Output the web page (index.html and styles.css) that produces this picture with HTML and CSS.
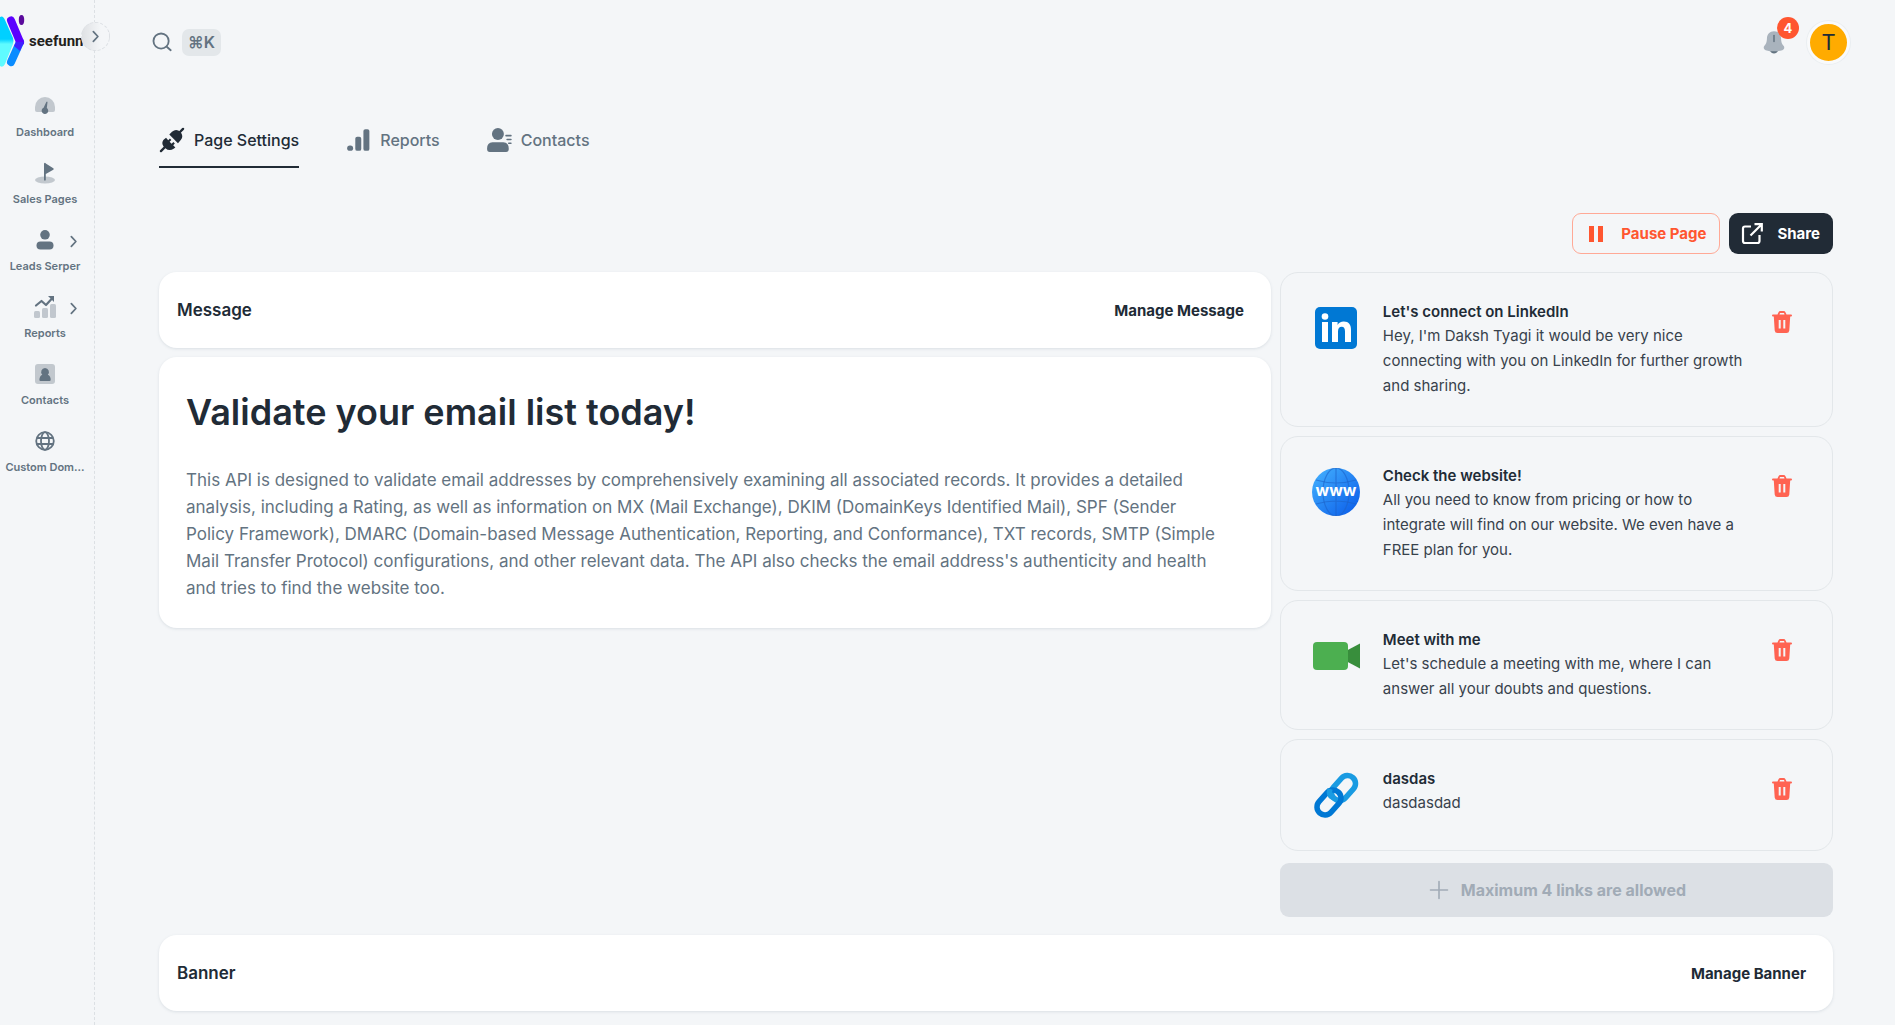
FILE: index.html
```html
<!DOCTYPE html>
<html lang="en">
<head>
<meta charset="utf-8">
<meta name="viewport" content="width=device-width, initial-scale=1">
<title>Page Settings</title>
<link rel="stylesheet" href="styles.css">
</head>
<body>
<svg class="sprite" aria-hidden="true">
  <symbol id="trash" viewBox="0 0 24 24"><path fill-rule="evenodd" d="M7.500 4.500 8.400 2.400Q9 1 10.500 1h3Q15 1 15.600 2.400l.9 2.100H21a1 1 0 0 1 0 2h-.8l-.9 14Q19 23 16.500 23h-9Q5 23 4.700 20.500l-.9-14H3a1 1 0 0 1 0-2zM9.500 4.500h5L14 3h-4zM8.700 10v8.500h2V10zM13.300 10v8.500h2V10z"/></symbol>
  <symbol id="chevron" viewBox="0 0 12 12"><path d="M4 1.500 8.200 6 4 10.500" fill="none" stroke="currentColor" stroke-width="1.600" stroke-linecap="round" stroke-linejoin="round"/></symbol>
</svg>
<div class="layout">
  <aside class="sidebar">
    <a class="logo" href="#" aria-label="seefunnel">
      <svg class="logo-mark" viewBox="0 0 26 54" aria-hidden="true">
        <defs><linearGradient id="cyan" x2="0" y2="1"><stop offset="0.450" stop-color="#00d0ff"/><stop offset="0.550" stop-color="#5ffbff"/></linearGradient></defs>
        <path d="M0 3Q3 1 5 6L13 24Q14 27 13 30L5 50Q3 54 0 52z" fill="url(#cyan)"/>
        <path d="M11 48 20 28" stroke="#0a8cff" stroke-width="8" stroke-linecap="round"/>
        <path d="M11 6.500 20 28" stroke="#5b00ff" stroke-width="8" stroke-linecap="round"/>
        <path d="M16 28h8L20 37 14 32z" fill="#4020ff"/>
        <ellipse cx="21.500" cy="6" rx="2.700" ry="5" fill="#5a0a9c"/>
      </svg>
      <span class="logo-text">seefunnel</span>
    </a>
    <button class="collapse" aria-label="Expand menu"><svg width="13" height="13"><use href="#chevron"/></svg></button>
    <nav class="menu">
      <a href="#"><svg viewBox="0 0 24 24"><path opacity=".35" d="M2 13a10 10 0 0 1 20 0v3q0 2-2 2H4q-2 0-2-2z"/><path d="M14.500 8.200 13.800 14a3.300 3.300 0 1 1-3.200-.3l2.700-5.800q1-.8 1.200.3z"/></svg><span>Dashboard</span></a>
      <a href="#"><svg viewBox="0 0 24 24"><ellipse opacity=".35" cx="12" cy="19" rx="10" ry="3.500"/><path d="M11 2.500q1-1.500 1.800 0l7.500 4.700q1 .8 0 1.500L12.800 13v6q-.9 1.500-1.800 0z"/></svg><span>Sales Pages</span></a>
      <a href="#"><svg viewBox="0 0 24 24"><circle cx="12" cy="6.800" r="4.800"/><rect x="3.500" y="13.500" width="17" height="8" rx="4"/></svg><span>Leads Serper</span><svg class="more"><use href="#chevron"/></svg></a>
      <a href="#"><svg viewBox="0 0 24 24"><g opacity=".35"><rect x="1" y="16" width="6" height="7" rx="1.500"/><rect x="9" y="13" width="6" height="10" rx="1.500"/><rect x="17" y="9" width="6" height="14" rx="1.500"/></g><path d="M3 10.500 8.500 6l4.500 4 6-6.500" fill="none" stroke="currentColor" stroke-width="2.200" stroke-linecap="round" stroke-linejoin="round"/><path d="M15 1h6v6z"/></svg><span>Reports</span><svg class="more"><use href="#chevron"/></svg></a>
      <a href="#"><svg viewBox="0 0 24 24"><rect opacity=".35" x="2" y="2" width="20" height="20" rx="3"/><path d="M12 6a4 4 0 0 1 2.800 6.800q3 1.300 2.900 5.200Q17.600 19 16.500 19h-9q-1 0-1.100-1 0-4 2.900-5.200A4 4 0 0 1 12 6z"/></svg><span>Contacts</span></a>
      <a href="#"><svg viewBox="0 0 24 24"><g fill="none" stroke="currentColor" stroke-width="1.800"><circle cx="12" cy="12" r="8.800"/><ellipse cx="12" cy="12" rx="4" ry="8.800"/><path d="M4 9h16M4 15h16"/></g></svg><span>Custom Dom...</span></a>
    </nav>
  </aside>
  <div class="content">
    <header class="topbar">
      <button class="search" aria-label="Search"><svg width="22" height="22" viewBox="0 0 24 24"><path d="M17.500 17.500 21.500 21" /><circle cx="11" cy="11" r="8.300"/></svg><kbd>⌘K</kbd></button>
      <div class="account">
        <button class="bell" aria-label="4 notifications"><svg width="26" height="26" viewBox="0 0 24 24"><path d="M8 19.500h8q-1.500 3-4 3t-4-3z" fill="#637381"/><path d="M12 2c-4 0-6.300 2.700-6.500 6.500-.2 4-.8 5-2.500 7.300-1.200 2 .1 3.300 1.300 3.700 5 1.500 10.400 1.500 15.400 0 1.200-.4 2.500-1.700 1.300-3.700-1.700-2.300-2.300-3.300-2.500-7.300C18.300 4.700 16 2 12 2z" fill="#a9b3bd"/><path d="M12 6v5.500" stroke="#637381" stroke-width="1.400" stroke-linecap="round"/></svg><span class="badge">4</span></button>
        <button class="avatar">T</button>
      </div>
    </header>
    <main>
      <nav class="tabs">
        <a class="active" href="#"><svg viewBox="0 0 24 24"><path d="M1.800 22.200 6 18M18 6l4.200-4.200" stroke="currentColor" stroke-width="2.200" stroke-linecap="round"/><path d="M4 12 6.500 10l2 2.200 1.600-1.500 1.300 1.300-1.600 1.700 1.800 1.800 1.700-1.600 1.300 1.300-1.500 1.600 2 2.200L13.500 20q-4 2.800-7.600-.5-4.600-3.500-1.900-7.500z"/><path d="M9.500 7 12 4.300q4-3.300 7.800.2 3.300 3.800.3 7.600L17.500 15z"/></svg>Page Settings</a>
        <a href="#"><svg viewBox="0 0 24 24"><rect x="2" y="17" width="5.500" height="5" rx="2.500"/><rect x="9.500" y="9" width="5.500" height="13" rx="1.800"/><rect x="17" y="2" width="5.500" height="20" rx="1.800"/></svg>Reports</a>
        <a href="#"><svg viewBox="0 0 24 24"><circle cx="11" cy="6.500" r="5.500"/><path d="M1 20q0-6 5-6h10q5 0 5 6 0 3-2.500 3h-15Q1 23 1 20z"/><path d="M18.500 8H23M19.500 11.500H23M21 15h2" stroke="currentColor" stroke-width="1.500" stroke-linecap="round"/></svg>Contacts</a>
      </nav>
      <div class="actions">
        <button class="btn pause"><svg viewBox="0 0 24 24"><path d="M5 4h5v16H5zM14 4h5v16h-5z"/></svg>Pause Page</button>
        <button class="btn share"><svg viewBox="0 0 24 24"><path d="M11 4.500H5A2 2 0 0 0 3 6.500V19a2 2 0 0 0 2 2h12.500a2 2 0 0 0 2-2v-6M10.500 13.500 21.500 2.500M14.500 2.200h7.300v7.300" fill="none" stroke="currentColor" stroke-width="2.200"/></svg>Share</button>
      </div>
      <div class="columns">
        <div class="stack">
          <section class="bar card"><h2>Message</h2><button>Manage Message</button></section>
          <article class="message card">
            <h1>Validate your email list today!</h1>
            <p>This API is designed to validate email addresses by comprehensively examining all associated records. It provides a detailed analysis, including a Rating, as well as information on MX (Mail Exchange), DKIM (DomainKeys Identified Mail), SPF (Sender Policy Framework), DMARC (Domain-based Message Authentication, Reporting, and Conformance), TXT records, SMTP (Simple Mail Transfer Protocol) configurations, and other relevant data. The API also checks the email address's authenticity and health and tries to find the website too.</p>
          </article>
        </div>
        <div class="stack">
          <article class="link">
            <svg class="thumb" viewBox="0 0 48 48"><rect x="3" y="3" width="42" height="42" rx="5" fill="#0078d4"/><g fill="#fff"><rect x="10" y="18" width="6" height="20"/><circle cx="13" cy="12.500" r="3.300"/><path d="M20 18h5.600v3c1-2 3.200-3.500 6.200-3.500 5 0 7.200 3 7.200 8.500v12h-6V27.500c0-3-1-4.700-3.300-4.700-2.500 0-3.700 1.700-3.700 4.700V38h-6z"/></g></svg>
            <div class="text"><h3>Let's connect on LinkedIn</h3><p>Hey, I'm Daksh Tyagi it would be very nice connecting with you on LinkedIn for further growth and sharing.</p></div>
            <button class="delete" aria-label="Delete link"><svg><use href="#trash"/></svg></button>
          </article>
          <article class="link">
            <svg class="thumb" viewBox="0 0 48 48"><defs><linearGradient id="globe" x2="1" y2="1"><stop offset="0" stop-color="#46b4ff"/><stop offset="1" stop-color="#0758e8"/></linearGradient></defs><circle cx="24" cy="24" r="24" fill="url(#globe)"/><g fill="none" stroke="#1d62c8" stroke-opacity=".6" stroke-width="1.200"><ellipse cx="24" cy="24" rx="13" ry="24"/><path d="M24 0v48M4 12q20 6 40 0M4 36q20-6 40 0"/></g><text x="24" y="28" text-anchor="middle" class="www">www</text></svg>
            <div class="text"><h3>Check the website!</h3><p>All you need to know from pricing or how to integrate will find on our website. We even have a FREE plan for you.</p></div>
            <button class="delete" aria-label="Delete link"><svg><use href="#trash"/></svg></button>
          </article>
          <article class="link">
            <svg class="thumb" viewBox="0 0 48 48"><path d="M32 20 48 11.500v25L32 28z" fill="#388e3c"/><rect x="1" y="10" width="35" height="28" rx="4" fill="#4caf50"/></svg>
            <div class="text"><h3>Meet with me</h3><p>Let's schedule a meeting with me, where I can answer all your doubts and questions.</p></div>
            <button class="delete" aria-label="Delete link"><svg><use href="#trash"/></svg></button>
          </article>
          <article class="link">
            <svg class="thumb" viewBox="0 0 48 48"><g fill="none" stroke-width="5.500"><rect x="-14" y="-8" width="28" height="16" rx="8" transform="translate(31.500 17) rotate(-48)" stroke="#199be2"/><rect x="-14" y="-8" width="28" height="16" rx="8" transform="translate(17 31.500) rotate(-48)" stroke="#0078d4"/><path d="M18 18q-2 6 3 8.500" stroke="#199be2"/></g></svg>
            <div class="text"><h3>dasdas</h3><p>dasdasdad</p></div>
            <button class="delete" aria-label="Delete link"><svg><use href="#trash"/></svg></button>
          </article>
          <button class="add" disabled><svg width="24" height="24" viewBox="0 0 24 24"><path d="M12 3.500v17M3.500 12h17" stroke="currentColor" stroke-width="1.600" stroke-linecap="round"/></svg>Maximum 4 links are allowed</button>
        </div>
      </div>
      <section class="bar card banner"><h2>Banner</h2><button>Manage Banner</button></section>
    </main>
  </div>
</div>
</body>
</html>
```
FILE: styles.css
```css
* { box-sizing: border-box; }
body { margin: 0; background: #f4f6f8; color: #212b36; font-family: Inter, "Liberation Sans", sans-serif; font-size: 15px; }
h1, h2, h3, p { margin: 0; }
a { color: inherit; text-decoration: none; }
button { font: inherit; color: inherit; background: none; border: 0; padding: 0; cursor: pointer; }
svg { fill: currentColor; flex: none; }
.sprite { position: absolute; width: 0; height: 0; }

.layout { display: flex; min-height: 100vh; }
.sidebar { position: relative; flex: none; width: 95px; border-right: 1px dashed #dce0e4; }
.logo { display: flex; align-items: center; gap: 3px; height: 54px; margin-top: 14px; }
.logo-mark { width: 26px; height: 54px; }
.logo-text { font-family: Roboto, "Liberation Sans", sans-serif; font-size: 15px; font-weight: 700; color: #231f20; }
.collapse { position: absolute; top: 22px; right: -16px; width: 29px; height: 29px; border: 1px dashed #dce0e4; border-radius: 50%; background: linear-gradient(90deg, #dfe1e4, #f4f6f8 70%); display: grid; place-items: center; color: #637381; }
.menu { display: flex; flex-direction: column; gap: 4px; padding: 22px 4px 0 0; color: #637381; }
.menu a { position: relative; display: flex; flex-direction: column; align-items: center; gap: 5px; height: 63px; padding-top: 4px; font-size: 11px; line-height: 18px; font-weight: 600; }
.menu svg { width: 24px; height: 24px; }
.menu .more { position: absolute; left: 67px; top: 11px; width: 13px; height: 13px; }

.content { flex: 1; min-width: 0; }
.topbar { display: flex; justify-content: space-between; align-items: center; height: 84px; padding: 0 45px 0 56px; }
.search { display: flex; align-items: center; gap: 9px; color: #637381; }
.search svg { fill: none; stroke: currentColor; stroke-width: 2; stroke-linecap: round; }
.search kbd { font: 600 16px/27px Inter, sans-serif; padding: 0 6px; border-radius: 7px; background: #e3e7ea; }
.account { display: flex; align-items: center; gap: 20px; }
.bell { position: relative; display: grid; }
.badge { position: absolute; left: 16px; top: -12px; width: 22px; height: 22px; border-radius: 50%; background: #ff5630; color: #fff; font-size: 13px; line-height: 22px; font-weight: 700; }
.avatar { width: 43px; height: 43px; border-radius: 50%; background: #ffab00; border: 3px solid #f9fafb; box-shadow: 0 0 0 1px #eaeef1; font-family: Roboto, sans-serif; font-size: 22px; }

main { padding: 24px 62px 14px 64px; }
.tabs { display: flex; gap: 46px; }
.tabs a { display: flex; align-items: center; gap: 9px; height: 60px; padding-top: 6px; border-bottom: 2px solid transparent; color: #637381; font-size: 16px; font-weight: 500; }
.tabs .active { color: #212b36; border-color: #212b36; }
.tabs svg { width: 26px; height: 26px; }
.actions { display: flex; justify-content: flex-end; gap: 9px; margin: 45px 0 18px; }
.btn { display: flex; align-items: center; gap: 13px; height: 41px; padding: 0 13px 0 11px; border-radius: 9px; font-weight: 700; }
.btn svg { width: 24px; height: 24px; }
.pause { color: #ff5630; border: 1px solid #ffa996; }
.share { color: #fff; background: #212b36; }

.columns { display: grid; grid-template-columns: minmax(0, 2.01fr) minmax(0, 1fr); gap: 9px; }
.stack { display: flex; flex-direction: column; gap: 9px; }
.card { background: #fff; border-radius: 18px; box-shadow: 0 1px 3px rgba(145, 158, 171, .25); }
.bar { display: flex; justify-content: space-between; align-items: center; height: 76px; padding: 0 27px 0 18px; }
.bar h2 { font-size: 17px; font-weight: 600; }
.bar button { font-weight: 700; }
.message { padding: 28px 50px 26px 27px; }
.message h1 { font-size: 36px; line-height: 54px; font-weight: 600; margin-bottom: 28px; }
.message p { font-size: 17px; line-height: 27px; color: #637381; }
.link { display: flex; align-items: flex-start; gap: 23px; padding: 27px 30px 27px 31px; border: 1px solid #e3e7ea; border-radius: 18px; }
.thumb { width: 48px; height: 48px; margin: 4px 0; }
.text { flex: 1; min-width: 0; padding: 0 12px 1px 0; }
.text h3 { font-size: 15px; line-height: 23px; font-weight: 600; }
.text p { line-height: 25px; color: #38424c; }
.www { font: 700 16px Inter, sans-serif; fill: #fff; }
.delete { display: grid; place-items: center; width: 40px; height: 40px; margin: 2px 0 0 -23px; color: #ff6352; }
.delete svg { width: 24px; height: 24px; }
.add { display: flex; align-items: center; justify-content: center; gap: 10px; height: 54px; margin-top: 3px; border-radius: 9px; background: #dce0e5; color: #a1abb6; font-size: 16px; font-weight: 700; }
.banner { margin-top: 18px; }
```
